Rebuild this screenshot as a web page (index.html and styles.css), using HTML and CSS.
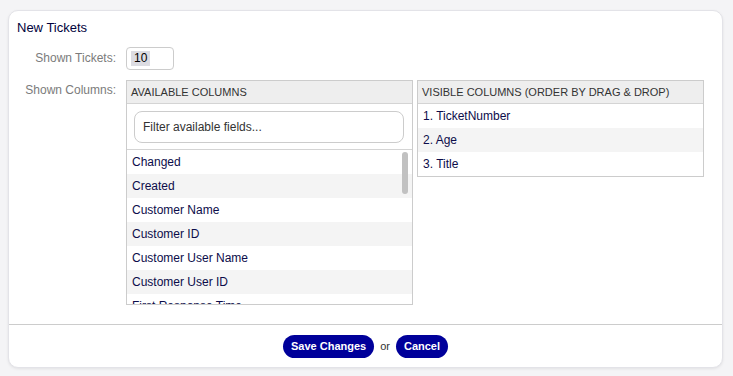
FILE: index.html
```html
<!DOCTYPE html>
<html lang="en">

<head>
    <meta charset="UTF-8">
    <meta name="viewport" content="width=device-width, initial-scale=1.0">
    <title>New Tickets</title>
    <link rel="stylesheet" href="styles.css">
</head>

<body>
    <div class="card">
        <h2 class="card-title">New Tickets</h2>

        <div class="settings">
            <div class="field-row">
                <label class="field-label">Shown Tickets:</label>
                <div class="count-input"><span class="selected">10</span></div>
            </div>

            <div class="field-row">
                <label class="field-label columns-label">Shown Columns:</label>
                <div class="columns">
                    <div class="column-box available">
                        <div class="column-head">Available Columns</div>
                        <div class="filter-wrap">
                            <input type="text" class="filter-input" placeholder="Filter available fields...">
                        </div>
                        <ul class="column-list">
                            <li>Changed</li>
                            <li>Created</li>
                            <li>Customer Name</li>
                            <li>Customer ID</li>
                            <li>Customer User Name</li>
                            <li>Customer User ID</li>
                            <li>First Response Time</li>
                        </ul>
                        <div class="scroll-thumb"></div>
                    </div>

                    <div class="column-box visible">
                        <div class="column-head">Visible Columns (order by drag &amp; drop)</div>
                        <ul class="column-list">
                            <li>1. TicketNumber</li>
                            <li>2. Age</li>
                            <li>3. Title</li>
                        </ul>
                    </div>
                </div>
            </div>
        </div>

        <div class="card-footer">
            <button type="button" class="button">Save Changes</button>
            <span class="or">or</span>
            <button type="button" class="button">Cancel</button>
        </div>
    </div>
</body>

</html>
```

FILE: styles.css
```css
body {
    font-family: "Liberation Sans", Arial, sans-serif;
    font-size: 12px;
    color: #0c0c4a;
    background-color: #f4f4f6;
    margin: 0;
    padding: 10px 10px 8px 8px;
}

.card {
    background-color: #fff;
    border: 1px solid #e3e3e8;
    border-radius: 10px;
    box-shadow: 0 1px 3px rgba(0, 0, 0, 0.08);
    height: 358px;
    box-sizing: border-box;
    display: flex;
    flex-direction: column;
}

.card-title {
    margin: 0;
    padding: 9px 8px 0;
    font-size: 13px;
    font-weight: normal;
    color: #00023c;
    line-height: 16px;
}

.settings {
    flex: 1;
    padding-top: 11px;
}

.field-row {
    display: flex;
    gap: 9px;
    margin-bottom: 10px;
}

.field-label {
    width: 107px;
    padding-right: 1px;
    text-align: right;
    color: #7b7b7b;
    line-height: 23px;
}

.columns-label {
    line-height: 20px;
}

.count-input {
    width: 48px;
    height: 23px;
    border: 1px solid #ccc;
    border-radius: 4px;
    box-sizing: border-box;
    padding: 3px 4px;
    line-height: 15px;
    color: #000;
}

.selected {
    display: inline-block;
    background-color: #dcdce2;
    padding: 0 3px;
}

.columns {
    display: flex;
    align-items: flex-start;
    gap: 4px;
}

.column-box {
    width: 287px;
    border: 1px solid #ccc;
    box-sizing: border-box;
    position: relative;
}

.available {
    height: 225px;
    overflow: hidden;
}

.column-head {
    background-color: #eee;
    border-bottom: 1px solid #d4d4d4;
    height: 22px;
    line-height: 22px;
    padding-left: 4px;
    font-size: 11px;
    text-transform: uppercase;
    color: #333;
}

.filter-wrap {
    padding: 7px 8px 6px 7px;
    border-bottom: 1px solid #d4d4d4;
}

.filter-input {
    width: 100%;
    height: 32px;
    box-sizing: border-box;
    border: 1px solid #ccc;
    border-radius: 8px;
    padding: 0 8px;
    font-family: "Liberation Sans", Arial, sans-serif;
    font-size: 12px;
}

.filter-input::placeholder {
    color: #333;
}

.column-list {
    list-style: none;
    margin: 0;
    padding: 0;
}

.column-list li {
    height: 24px;
    line-height: 24px;
    padding-left: 5px;
}

.column-list li:nth-child(even) {
    background-color: #f4f4f4;
}

.scroll-thumb {
    position: absolute;
    top: 71px;
    right: 4px;
    width: 6px;
    height: 42px;
    border-radius: 3px;
    background-color: #c1c1c1;
}

.card-footer {
    border-top: 1px solid #ccc;
    height: 42px;
    display: flex;
    align-items: center;
    justify-content: center;
    gap: 6px;
}

.button {
    background-color: #00009a;
    color: #fff;
    border: none;
    height: 23px;
    padding: 0 8px;
    border-radius: 12px;
    font-family: "Liberation Sans", Arial, sans-serif;
    font-size: 11px;
    font-weight: bold;
    cursor: pointer;
}

.or {
    color: #333;
    font-size: 11px;
}
```
